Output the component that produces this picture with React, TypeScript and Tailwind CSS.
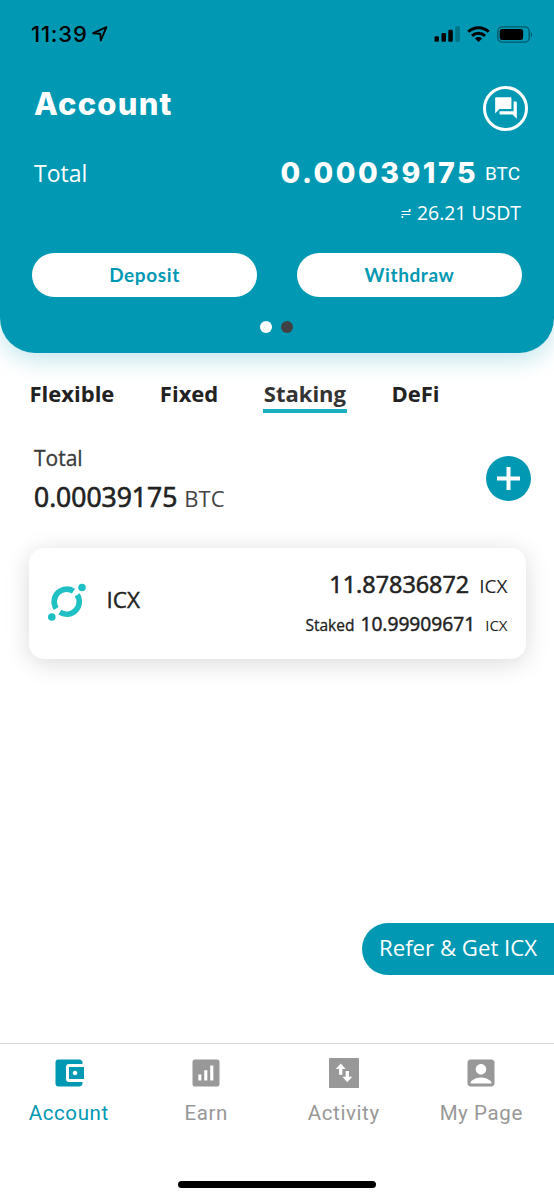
import { MdAccountBalanceWallet, MdAccountBox, MdForum } from "react-icons/md";

const tabs = ["Flexible", "Fixed", "Staking", "DeFi"];

function StatusBar() {
  return (
    <div className="flex h-[68px] items-center justify-between pl-[31px] pr-[21px] text-black">
      <div className="flex items-center gap-[4px]">
        <span className="font-[Inter,sans-serif] text-[22px] font-medium leading-none tracking-[0.8px]">11:39</span>
        <svg className="h-4 w-4" viewBox="0 0 16 16" fill="none" stroke="currentColor" strokeWidth="1.9" strokeLinejoin="round">
          <path d="M1.2 7.2 14.4 1.2 8.8 14.4 8.3 7.7z" />
        </svg>
      </div>
      <div className="flex items-center gap-[7px]">
        <svg className="h-4 w-[26px]" viewBox="0 0 26 16" fill="currentColor">
          <rect x="0.5" y="10.2" width="4.5" height="5.6" rx="1.2" />
          <rect x="7.5" y="7" width="4.5" height="8.8" rx="1.2" />
          <rect x="14.3" y="3.7" width="4.5" height="12.1" rx="1.2" />
          <rect x="21.3" y="0.3" width="4.5" height="15.5" rx="1.2" opacity="0.25" />
        </svg>
        <svg className="h-4 w-[23px]" viewBox="0 0 23 16" fill="none" stroke="currentColor" strokeWidth="3">
          <path d="M1.3 5.8a14.6 14.6 0 0 1 20.4 0" />
          <path d="M5 9.9a9.3 9.3 0 0 1 13 0" />
          <path d="M11.5 16 8 12.5a5 5 0 0 1 7 0z" fill="currentColor" stroke="none" />
        </svg>
        <svg className="h-[17px] w-9" viewBox="0 0 36 17">
          <rect x="0.8" y="0.9" width="31.4" height="15.2" rx="4.4" fill="none" stroke="#000" strokeOpacity="0.42" strokeWidth="1.4" />
          <rect x="2.7" y="2.9" width="23.4" height="11.2" rx="2.4" fill="#000" />
          <path d="M33.8 5.9c1.6.8 1.6 4.4 0 5.2z" fill="#000" opacity="0.45" />
        </svg>
      </div>
    </div>
  );
}

function Header() {
  return (
    <header className="h-[353px] rounded-b-[35px] bg-[#0098b3] text-white shadow-[0_8px_22px_rgba(0,152,179,0.22)]">
      <StatusBar />
      <div className="flex h-[80px] items-center justify-between pl-[34px] pr-[26px]">
        <h1 className="-mt-[9px] font-[Inter,sans-serif] text-[31px] font-extrabold leading-none tracking-[1.2px]">Account</h1>
        <button className="flex h-[45px] w-[45px] items-center justify-center rounded-full border-[3px] border-white">
          <MdForum className="h-[26px] w-[26px]" />
        </button>
      </div>
      <div className="flex h-[51px] items-center justify-between pl-[34px] pr-[34px]">
        <span className="text-[23px] leading-none">Total</span>
        <div className="flex items-center gap-[7px]">
          <span className="font-[Inter,sans-serif] text-[28.5px] font-extrabold leading-none tracking-[2.5px]">0.00039175</span>
          <span className="font-[Roboto,sans-serif] text-[19px] leading-none">BTC</span>
        </div>
      </div>
      <div className="flex h-[28px] items-center justify-end gap-[5px] pr-[33px]">
        <span className="text-[14px] leading-none">≓</span>
        <span className="text-[19.4px] leading-none">26.21 USDT</span>
      </div>
      <div className="mt-[26px] flex gap-[40px] px-8 font-[Lato,sans-serif] text-[19px] font-bold tracking-[0.6px] text-[#0098b3]">
        <button className="h-[44px] flex-1 rounded-full bg-white">Deposit</button>
        <button className="h-[44px] flex-1 rounded-full bg-white">Withdraw</button>
      </div>
      <div className="mt-[24px] flex justify-center gap-[9px] pr-[2px]">
        <span className="h-3 w-3 rounded-full bg-white" />
        <span className="h-3 w-3 rounded-full bg-[#414143]" />
      </div>
    </header>
  );
}

function Tabs() {
  return (
    <nav className="flex h-[60px] items-end gap-[43.5px] pl-[28.5px] text-[22px] font-bold text-[#222]">
      {tabs.map((tab) => (
        <button
          key={tab}
          className={`h-[37px] border-b-4 px-px leading-none ${tab === "Staking" ? "border-[#1bb0c0] text-[#333]" : "border-transparent"}`}
        >
          {tab}
        </button>
      ))}
    </nav>
  );
}

function IconLogo() {
  return (
    <svg className="-mt-[4px] h-[38px] w-[38px]" viewBox="0 0 38 38" fill="#1fc0c4">
      <circle cx="34" cy="4.5" r="3.8" />
      <circle cx="3.8" cy="34" r="3.8" />
      <g fill="none" stroke="#1fc0c4" strokeWidth="5.6">
        <path d="M8.2 25.5A12.5 12.5 0 0 1 25.5 8.2" />
        <path d="M29.2 11.9A12.5 12.5 0 0 1 11.9 29.2" />
      </g>
    </svg>
  );
}

function StakingSummary() {
  return (
    <section className="flex h-[135px] justify-between pl-[34px] pr-[23px] pt-[34px] text-[#222]">
      <div>
        <div className="text-[21px] leading-[22px] text-[#3a3a3a] [-webkit-text-stroke:0.3px]">Total</div>
        <div className="mt-[13px] flex items-baseline gap-[7px] leading-[30px]">
          <span className="text-[26.5px] [-webkit-text-stroke:0.7px]">0.00039175</span>
          <span className="text-[22px] text-[#444]">BTC</span>
        </div>
      </div>
      <button className="mt-[9px] flex h-[45px] w-[45px] items-center justify-center rounded-full bg-[#0098b3]">
        <svg className="h-[23px] w-[23px]" viewBox="0 0 23 23" stroke="#fff" strokeWidth="4">
          <path d="M11.5 0v23M0 11.5h23" />
        </svg>
      </button>
    </section>
  );
}

function AssetCard() {
  return (
    <section className="mx-[29px] flex h-[111px] w-[497px] items-center rounded-[15px] bg-white pl-[19px] pr-[18.5px] text-[#222] shadow-[0_4px_24px_rgba(0,0,0,0.15)]">
      <IconLogo />
      <span className="-mt-[7px] ml-[20.5px] text-[22.5px] [-webkit-text-stroke:0.4px]">ICX</span>
      <div className="ml-auto flex flex-col items-end pt-px">
        <div className="-mt-px flex h-[40px] items-baseline gap-[10px]">
          <span className="text-[23.4px] leading-[30px] [-webkit-text-stroke:0.6px]">11.87836872</span>
          <span className="text-[19px]">ICX</span>
        </div>
        <div className="flex h-[30px] items-baseline">
          <span className="text-[15.5px] [-webkit-text-stroke:0.3px]">Staked</span>
          <span className="ml-[6px] text-[19.2px] leading-[30px] [-webkit-text-stroke:0.5px]">10.99909671</span>
          <span className="ml-[10px] text-[15px]">ICX</span>
        </div>
      </div>
    </section>
  );
}

function EarnIcon() {
  return (
    <svg className="h-9 w-9" viewBox="0 0 24 24" fill="currentColor" fillRule="evenodd">
      <path d="M4.5 3h15A1.5 1.5 0 0 1 21 4.5v15a1.5 1.5 0 0 1-1.5 1.5h-15A1.5 1.5 0 0 1 3 19.5v-15A1.5 1.5 0 0 1 4.5 3zM6.9 13v4h2v-4zm3.9-2.9v6.9h2.1v-6.9zm4-3.1v10h2.1V7z" />
    </svg>
  );
}

function ActivityIcon() {
  return (
    <svg className="h-9 w-9" viewBox="0 0 24 24" fill="currentColor">
      <rect x="2" y="2" width="20" height="20" rx="0.4" />
      <path fill="#fff" d="M9.8 5.7 13.1 9.3H10.9V13.2H8.7V9.3H6.5zM13.1 10.6H15.3V14.5H17.5L14.2 18.1 10.9 14.5H13.1z" />
    </svg>
  );
}

const navItems = [
  { label: "Account", icon: <MdAccountBalanceWallet className="h-9 w-9" />, active: true },
  { label: "Earn", icon: <EarnIcon />, active: false },
  { label: "Activity", icon: <ActivityIcon />, active: false },
  { label: "My Page", icon: <MdAccountBox className="h-9 w-9" />, active: false },
];

function BottomNav() {
  return (
    <footer className="flex h-[157px] flex-col border-t border-[#d8d8d8] bg-white">
      <div className="grid w-[550px] grid-cols-4 pt-[11px]">
        {navItems.map((item) => (
          <button
            key={item.label}
            className={`flex flex-col items-center ${item.active ? "text-[#0098b3]" : "text-[#989898]"}`}
          >
            {item.icon}
            <span className="mt-[11px] whitespace-nowrap font-[Roboto,sans-serif] text-[20.5px] leading-[22px] tracking-[0.6px]">{item.label}</span>
          </button>
        ))}
      </div>
      <div className="mx-auto mb-[12px] mt-auto h-[7px] w-[198px] rounded-full bg-black" />
    </footer>
  );
}

export default function App() {
  return (
    <div className="flex h-[1200px] w-[554px] flex-col overflow-hidden bg-white font-['Open_Sans',sans-serif]">
      <Header />
      <Tabs />
      <StakingSummary />
      <AssetCard />
      <div className="mt-auto flex justify-end pb-[68px]">
        <button className="h-[52px] w-[192px] whitespace-nowrap rounded-l-full bg-[#0098b3] pb-[2px] pl-[17px] text-left text-[22.2px] text-white">
          Refer &amp; Get ICX
        </button>
      </div>
      <BottomNav />
    </div>
  );
}
